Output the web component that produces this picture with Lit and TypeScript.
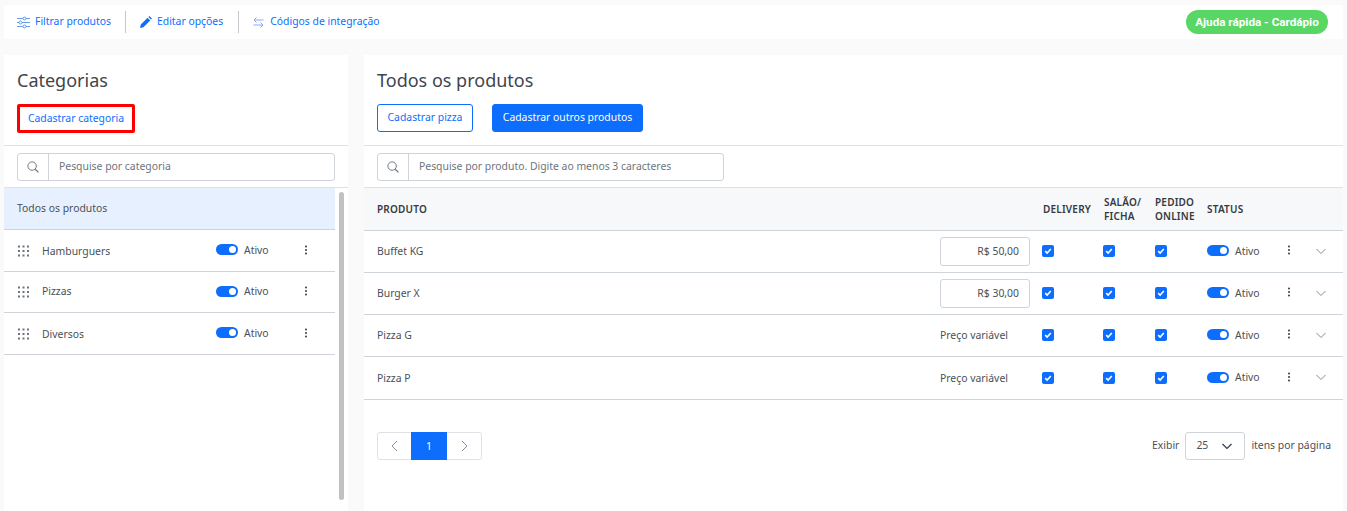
import { LitElement, html, css, svg } from "lit";
import { customElement } from "lit/decorators.js";

const searchIcon = html`<svg width="12" height="12" viewBox="0 0 16 16" fill="none" stroke="#6c757d" stroke-width="1.3"><circle cx="6.8" cy="6.8" r="5.6"/><path d="M11 11l4.2 4.2" stroke-width="1.6"/></svg>`;
const dots = html`<svg class="dots" width="4" height="12" viewBox="0 0 4 12" fill="#343a40"><circle cx="2" cy="2.5" r="1"/><circle cx="2" cy="6" r="1"/><circle cx="2" cy="9.5" r="1"/></svg>`;
const grip = html`<svg class="grip" width="11" height="12" viewBox="0 0 11 12" fill="#6c757d">${[0.5, 5, 9.5].map((y) => [1, 5.5, 10].map((x) => svg`<rect x="${x - 1}" y="${y}" width="2" height="2"/>`))}</svg>`;
const chevron = (c: string, w = 12, sw = 1) => html`<svg class="chev" width="${w}" height="${w}" viewBox="0 0 12 12" fill="none" stroke="${c}" stroke-width="${sw}"><path d="M1.5 4l4.5 4.5L10.5 4"/></svg>`;
const check = html`<span class="check"><svg width="8" height="8" viewBox="0 0 10 10" fill="none" stroke="#fff" stroke-width="2"><path d="M1.5 5.2l2.4 2.4 4.6-5"/></svg></span>`;
const toggle = html`<span class="toggle"><i></i></span>`;

const products = [
  { name: "Buffet KG", price: "R$ 50,00" },
  { name: "Burger X", price: "R$ 30,00" },
  { name: "Pizza G", price: "" },
  { name: "Pizza P", price: "" },
];

@customElement("app-root")
export class AppRoot extends LitElement {
  static styles = css`
    :host { display: block; width: 1347px; height: 511px; overflow: hidden; background: #fafafa; font-family: "Noto Sans", sans-serif; font-size: 10.4px; color: #495057; box-sizing: border-box; padding: 5px 4px 0; }
    * { box-sizing: border-box; }
    .t { position: relative; top: -1px; }
    .top { height: 34px; background: #fff; display: flex; align-items: center; padding: 0 15px 0 13px; color: #0d6efd; }
    .top .item { display: flex; align-items: center; gap: 5px; height: 22px; }
    .top .sep { width: 1px; height: 22px; background: #c4c8cc; margin: 0 13px 0 14px; }
    .top .second { margin: 0 1px 0 1px; }
    .top .third { gap: 6px; margin-left: 1px; }
    .top .help { margin-left: auto; height: 24px; width: 142px; border-radius: 12px; background: #58d764; color: #fff; font-family: Roboto, sans-serif; font-weight: 700; font-size: 11.7px; display: flex; align-items: center; justify-content: center; }
    .main { display: flex; gap: 16px; margin-top: 16px; height: 456px; }
    .left { width: 344px; background: #fff; display: flex; flex-direction: column; }
    .right { flex: 1; background: #fff; display: flex; flex-direction: column; }
    .head { height: 91px; border-bottom: 1px solid #dee2e6; padding: 12px 13px 0; }
    h2 { margin: 0; font-size: 18px; font-weight: 400; line-height: 26px; color: #3f464d; }
    .btns { display: flex; gap: 19px; margin-top: 11px; }
    .btn { height: 28px; display: flex; align-items: center; justify-content: center; border-radius: 3px; border: 1px solid #0d6efd; color: #0d6efd; }
    .btn.pizza { width: 96px; }
    .btn.solid { width: 151px; background: #0d6efd; color: #fff; }
    .btn.red { width: 118px; border: 3px solid #f00; height: 29px; border-radius: 2px; }
    .searchbar { height: 42px; border-bottom: 1px solid #dee2e6; padding: 7px 13px 0; }
    .search { height: 28px; border: 1px solid #ced4da; border-radius: 3px; display: flex; align-items: center; color: #6c757d; }
    .search.wide { width: 347px; }
    .search .ic { width: 31px; height: 100%; border-right: 1px solid #ced4da; display: flex; align-items: center; justify-content: center; }
    .search span { padding-left: 10px; }
    .listwrap { flex: 1; display: flex; min-height: 0; }
    .list { width: 331px; }
    .scroll { width: 5px; height: 308px; margin: 4px 0 0 4px; background: #c1c1c1; border-radius: 3px; }
    .all { height: 42px; background: #e7f0ff; border-bottom: 1px solid #ced4da; display: flex; align-items: center; padding-left: 13px; }
    .cat { height: 42px; border-bottom: 1px solid #ced4da; display: flex; align-items: center; padding-left: 14px; }
    .cat.short { height: 41px; }
    .cat.short .name { position: relative; top: -1px; }
    .cat .name { margin-left: 13px; width: 174px; }
    .cat .status { position: relative; top: -1px; }
    .cat .dots { margin-left: 35px; position: relative; top: -1px; }
    .status { display: flex; align-items: center; gap: 6px; }
    .toggle { width: 22px; height: 11px; border-radius: 6px; background: #0d6efd; position: relative; display: block; }
    .toggle i { position: absolute; right: 2px; top: 2px; width: 7px; height: 7px; border-radius: 50%; background: #fff; }
    .grid { display: grid; grid-template-columns: 563px 102px 61px 52px 52px 80px 28px 1fr; align-items: center; padding-left: 13px; border-bottom: 1px solid #ced4da; height: 42px; }
    .grid.last { height: 43px; }
    .grid.last .t { top: 0; }
    .grid .chev { position: relative; top: 1px; }
    .grid.last .chev { top: 0; }
    .grid.thead { height: 43px; background: #f7f8fa; color: #343a40; font-size: 10px; font-weight: 600; line-height: 14px; letter-spacing: 0.2px; }
    .hd1 { margin-left: 1px; }
    .grid .status { position: relative; top: -1px; }
    .price { width: 90px; height: 29px; border: 1px solid #ced4da; border-radius: 3px; display: flex; align-items: center; justify-content: flex-end; padding-right: 10px; }
    .check { width: 12px; height: 12px; border-radius: 2px; background: #0d6efd; display: flex; align-items: center; justify-content: center; margin-top: -1px; }
    .pag { display: flex; align-items: center; justify-content: space-between; padding: 32px 12px 0 13px; }
    .pager { display: flex; width: 105px; height: 28px; border: 1px solid #dee2e6; border-radius: 3px; align-items: stretch; }
    .pager div { display: flex; align-items: center; justify-content: center; }
    .pager .side { width: 33px; }
    .pager .on { flex: 0 0 36px; background: #0d6efd; color: #fff; margin: -1px 0; }
    .pager .side.r { width: 34px; }
    .per { display: flex; align-items: center; gap: 6px; }
    .sel { width: 60px; height: 28px; border: 1px solid #ced4da; border-radius: 3px; display: flex; align-items: center; justify-content: space-between; padding: 0 11px 0 10px; }
  `;

  render() {
    return html`
      <div class="top">
        <div class="item">
          <svg width="13" height="13" viewBox="0 0 13 13" fill="none" stroke="#5b8fe8" stroke-width="0.9"><path d="M0 2.5h6M9 2.5h4M0 6.5h2M5 6.5h8M0 10.5h6M9 10.5h4"/><circle cx="7.5" cy="2.5" r="1.5"/><circle cx="3.5" cy="6.5" r="1.5"/><circle cx="7.5" cy="10.5" r="1.5"/></svg>
          <span class="t">Filtrar produtos</span>
        </div>
        <div class="sep"></div>
        <div class="item second">
          <svg width="12" height="12" viewBox="0 0 12 12" fill="#0d6efd"><path d="M0 12l.8-3.4L7.6 1.8l2.6 2.6L3.4 11.2zM8.4 1l1-1 2.6 2.6-1 1z"/></svg>
          <span class="t">Editar opções</span>
        </div>
        <div class="sep"></div>
        <div class="item third">
          <svg width="11" height="11" viewBox="0 0 11 11" fill="none" stroke="#8fa8ee" stroke-width="1"><path d="M10.5 3H1M3.5.5L1 3l2.5 2.5M.5 8H10M7.5 5.5L10 8l-2.5 2.5"/></svg>
          <span class="t">Códigos de integração</span>
        </div>
        <div class="help">Ajuda rápida - Cardápio</div>
      </div>
      <div class="main">
        <section class="left">
          <div class="head">
            <h2>Categorias</h2>
            <div class="btns"><div class="btn red"><span class="t">Cadastrar categoria</span></div></div>
          </div>
          <div class="searchbar"><div class="search"><div class="ic">${searchIcon}</div><span class="t">Pesquise por categoria</span></div></div>
          <div class="listwrap">
            <div class="list">
              <div class="all"><span class="t">Todos os produtos</span></div>
              ${["Hamburguers", "Pizzas", "Diversos"].map(
                (n, i) => html`<div class="cat ${i === 1 ? "short" : ""}">${grip}<span class="name">${n}</span><div class="status">${toggle}<span>Ativo</span></div>${dots}</div>`
              )}
            </div>
            <div class="scroll"></div>
          </div>
        </section>
        <section class="right">
          <div class="head">
            <h2>Todos os produtos</h2>
            <div class="btns"><div class="btn pizza"><span class="t">Cadastrar pizza</span></div><div class="btn solid"><span class="t">Cadastrar outros produtos</span></div></div>
          </div>
          <div class="searchbar"><div class="search wide"><div class="ic">${searchIcon}</div><span class="t">Pesquise por produto. Digite ao menos 3 caracteres</span></div></div>
          <div class="grid thead"><div>PRODUTO</div><div></div><div class="hd1">DELIVERY</div><div class="hd1">SALÃO/<br />FICHA</div><div>PEDIDO<br />ONLINE</div><div>STATUS</div><div></div><div></div></div>
          ${products.map(
            (p, i) => html`<div class="grid ${i === 3 ? "last" : ""}">
              <div class="t">${p.name}</div>
              <div>${p.price ? html`<div class="price"><span class="t">${p.price}</span></div>` : html`<span class="t">Preço variável</span>`}</div>
              <div>${check}</div><div>${check}</div><div>${check}</div>
              <div class="status">${toggle}<span>Ativo</span></div>
              <div>${dots}</div>
              <div>${chevron("#868e96")}</div>
            </div>`
          )}
          <div class="pag">
            <div class="pager">
              <div class="side"><svg width="12" height="12" viewBox="0 0 12 12" fill="none" stroke="#868e96"><path d="M8 1L3 6l5 5"/></svg></div>
              <div class="on">1</div>
              <div class="side r"><svg width="12" height="12" viewBox="0 0 12 12" fill="none" stroke="#868e96"><path d="M4 1l5 5-5 5"/></svg></div>
            </div>
            <div class="per"><span class="t">Exibir</span> <div class="sel"><span class="t">25</span> ${chevron("#343a40", 12, 1.2)}</div> <span class="t">itens por página</span></div>
          </div>
        </section>
      </div>
    `;
  }
}
